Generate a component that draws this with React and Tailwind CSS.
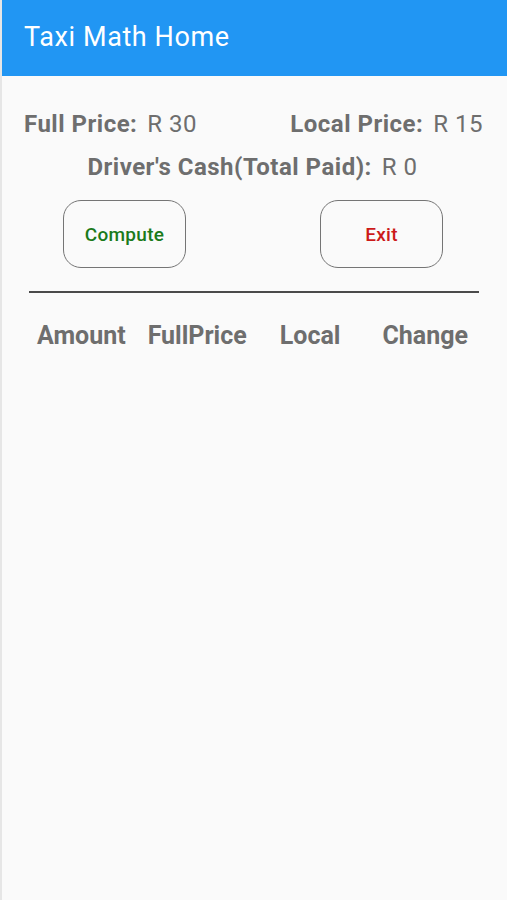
import React from "react";

export default function App() {
  return (
    <div className="w-[507px] h-[900px] bg-[#fafafa] flex flex-col border-l-2 border-[#e6e6e6]" style={{ fontFamily: "Roboto, 'Liberation Sans', sans-serif" }}>
      <div className="h-[76px] bg-[#2196f3] flex items-center pl-[22px] shrink-0">
        <span className="text-white text-[27px] tracking-[0.6px] leading-none pb-[2px]">Taxi Math Home</span>
      </div>
      <div className="flex flex-col">
        <div className="flex justify-between items-center pl-[22px] pr-[24px] mt-[33px] text-[24px] tracking-[0.5px] text-[#6e6e6e] leading-[30px]">
          <span><span className="font-bold">Full Price:</span><span className="ml-[10px]">R 30</span></span>
          <span><span className="font-bold">Local Price:</span><span className="ml-[10px]">R 15</span></span>
        </div>
        <div className="flex justify-center text-[24px] tracking-[0.5px] text-[#6e6e6e] leading-[30px] mt-[13px] pr-[4px]">
          <span><span className="font-bold">Driver's Cash(Total Paid):</span><span className="ml-[10px]">R 0</span></span>
        </div>
        <div className="flex mt-[18px]">
          <div className="ml-[61px] w-[123px] h-[68px] rounded-[18px] border border-[#757575] flex items-center justify-center pt-[3px] text-[19px] tracking-[0.3px] font-medium text-[#1b7a1b]">Compute</div>
          <div className="ml-[134px] w-[123px] h-[68px] rounded-[18px] border border-[#757575] flex items-center justify-center pt-[3px] text-[19px] tracking-[0.3px] font-medium text-[#cc1a1a]">Exit</div>
        </div>
        <div className="ml-[27px] w-[450px] h-[2px] bg-[#4a4a4a] mt-[23px]" />
        <div className="flex items-center mt-[28px] text-[25px] font-bold text-[#6e6e6e] leading-[30px]">
          <span className="ml-[35px]">Amount</span>
          <span className="ml-[22px]">FullPrice</span>
          <span className="ml-[33px]">Local</span>
          <span className="ml-[42px]">Change</span>
        </div>
      </div>
    </div>
  );
}
